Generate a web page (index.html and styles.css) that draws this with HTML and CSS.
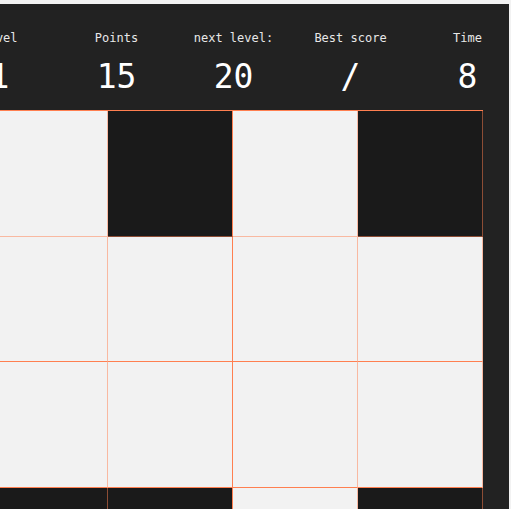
FILE: index.html
```html
<!DOCTYPE html>
<html lang="en">
<head>
<meta charset="utf-8">
<title>Tiles</title>
<link rel="stylesheet" href="styles.css">
</head>
<body>
<div class="app">
  <div class="stats">
    <div class="stat"><div class="label">Level</div><div class="value">1</div></div>
    <div class="stat"><div class="label">Points</div><div class="value">15</div></div>
    <div class="stat"><div class="label">next level:</div><div class="value">20</div></div>
    <div class="stat"><div class="label">Best score</div><div class="value">/</div></div>
    <div class="stat"><div class="label">Time</div><div class="value">8</div></div>
  </div>
  <div class="board">
    <div class="cell r1 c1"></div><div class="cell r1 c2 dark"></div><div class="cell r1 c3"></div><div class="cell r1 c4 dark"></div>
    <div class="cell r2 c1"></div><div class="cell r2 c2"></div><div class="cell r2 c3"></div><div class="cell r2 c4"></div>
    <div class="cell r3 c1"></div><div class="cell r3 c2"></div><div class="cell r3 c3"></div><div class="cell r3 c4"></div>
    <div class="cell r4 c1 dark"></div><div class="cell r4 c2 dark"></div><div class="cell r4 c3"></div><div class="cell r4 c4 dark"></div>
  </div>
</div>
</body>
</html>
```
FILE: styles.css
```css
html, body {
  margin: 0;
  padding: 0;
  background: #f2f2f2;
  overflow: hidden;
  height: 100%;
}
.app {
  background: #222222;
  margin: 4px 2px 0 -59px;
  height: calc(100% - 4px);
  box-sizing: border-box;
  padding-top: 26px;
  font-family: "DejaVu Sans Mono", monospace;
  color: #ffffff;
}
.stats {
  display: flex;
  width: 585px;
}
.stat {
  flex: none;
  width: 117px;
  text-align: center;
}
.label {
  font-size: 12px;
  line-height: 16px;
  color: #e8e8e8;
}
.value {
  margin-top: 11px;
  font-size: 33px;
  line-height: 40px;
}
.board {
  margin-top: 13px;
  margin-left: 42px;
  width: 500px;
  display: grid;
  grid-template-columns: repeat(4, 125px);
  grid-template-rows: 126px 125px 126px 125px;
  border-top: 1px solid #ff7f50;
}
.cell {
  box-sizing: border-box;
  background: #f2f2f2;
  border-right: 1px solid rgba(255, 127, 80, 0.5);
  border-bottom: 1px solid #ff7f50;
}
.cell.dark { background: #1a1a1a; }
.r1 { border-bottom-color: rgba(255, 127, 80, 0.5); }
.c2 { border-right-color: #ff7f50; }
```
